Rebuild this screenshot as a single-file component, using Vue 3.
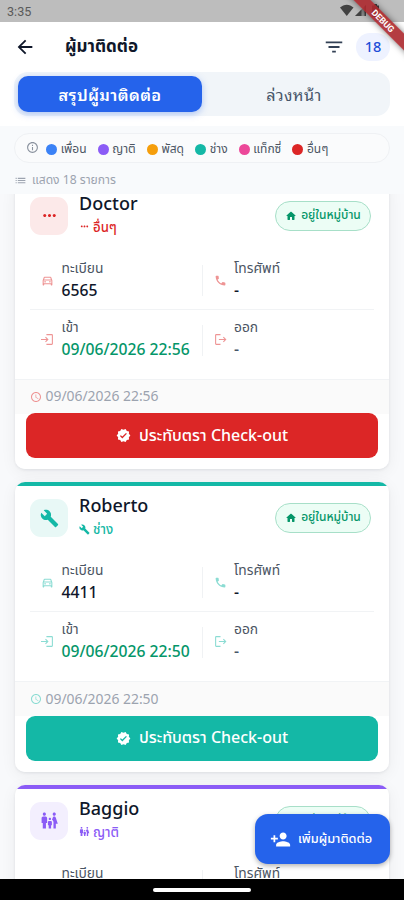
<script setup>
import { h } from 'vue'

const ICONS = {
  back: 'M20 11H7.83l5.59-5.59L12 4l-8 8 8 8 1.41-1.41L7.83 13H20v-2z',
  filter: 'M10 18h4v-2h-4v2zM3 6v2h18V6H3zm3 7h12v-2H6v2z',
  info: 'M11 7h2v2h-2zm0 4h2v6h-2zm1-9C6.48 2 2 6.48 2 12s4.48 10 10 10 10-4.48 10-10S17.52 2 12 2zm0 18c-4.41 0-8-3.59-8-8s3.59-8 8-8 8 3.59 8 8-3.59 8-8 8z',
  list: 'M3 13h2v-2H3v2zm0 4h2v-2H3v2zm0-8h2V7H3v2zm4 4h14v-2H7v2zm0 4h14v-2H7v2zM7 7v2h14V7H7z',
  dots: 'M6 10c-1.1 0-2 .9-2 2s.9 2 2 2 2-.9 2-2-.9-2-2-2zm12 0c-1.1 0-2 .9-2 2s.9 2 2 2 2-.9 2-2-.9-2-2-2zm-6 0c-1.1 0-2 .9-2 2s.9 2 2 2 2-.9 2-2-.9-2-2-2z',
  wrench: 'M22.7 19l-9.1-9.1c.9-2.3.4-5-1.5-6.9-2-2-5-2.4-7.4-1.3L9 6 6 9 1.6 4.7C.4 7.1.9 10.1 2.9 12.1c1.9 1.9 4.6 2.4 6.9 1.5l9.1 9.1c.4.4 1 .4 1.4 0l2.3-2.3c.5-.4.5-1.1.1-1.4z',
  family: 'M16 4c0-1.11.89-2 2-2s2 .89 2 2-.89 2-2 2-2-.89-2-2zm4 18v-6h2.5l-2.54-7.63C19.68 7.55 18.92 7 18.06 7h-.12c-.86 0-1.63.55-1.9 1.37l-.86 2.58c1.08.6 1.82 1.73 1.82 3.05v8h3zm-7.5-10.5c.83 0 1.5-.67 1.5-1.5s-.67-1.5-1.5-1.5S11 9.17 11 10s.67 1.5 1.5 1.5zM5.5 6c1.11 0 2-.89 2-2s-.89-2-2-2-2 .89-2 2 .89 2 2 2zm2 16v-7H9V9c0-1.1-.9-2-2-2H4c-1.1 0-2 .9-2 2v6h1.5v7h4zm6.5 0v-4h1v-4c0-.82-.68-1.5-1.5-1.5h-2c-.82 0-1.5.68-1.5 1.5v4h1v4h3z',
  home: 'M10 19v-5h4v5c0 .55.45 1 1 1h3c.55 0 1-.45 1-1v-7h1.7c.46 0 .68-.57.33-.87L12.67 3.6c-.38-.34-.96-.34-1.34 0l-8.36 7.53c-.34.3-.13.87.33.87H5v7c0 .55.45 1 1 1h3c.55 0 1-.45 1-1z',
  car: 'M18.92 6.01C18.72 5.42 18.16 5 17.5 5h-11c-.66 0-1.21.42-1.42 1.01L3 12v8c0 .55.45 1 1 1h1c.55 0 1-.45 1-1v-1h12v1c0 .55.45 1 1 1h1c.55 0 1-.45 1-1v-8l-2.08-5.99zM6.85 7h10.29l1.08 3.11H5.77L6.85 7zM19 17H5v-5h14v5zM7.5 13a1.5 1.5 0 1 0 0 3a1.5 1.5 0 1 0 0-3zM16.5 13a1.5 1.5 0 1 0 0 3a1.5 1.5 0 1 0 0-3z',
  phone: 'M6.62 10.79c1.44 2.83 3.76 5.14 6.59 6.59l2.2-2.2c.27-.27.67-.36 1.02-.24 1.12.37 2.33.57 3.57.57.55 0 1 .45 1 1V20c0 .55-.45 1-1 1-9.39 0-17-7.61-17-17 0-.55.45-1 1-1h3.5c.55 0 1 .45 1 1 0 1.25.2 2.45.57 3.57.11.35.03.74-.25 1.02l-2.2 2.2z',
  login: 'M10 2h10a2 2 0 0 1 2 2v16a2 2 0 0 1-2 2H10v-2h10V4H10zM0 11h10.2L7.6 8.4 9 7l5 5-5 5-1.4-1.4 2.6-2.6H0z',
  logout: 'M12 2H4a2 2 0 0 0-2 2v16a2 2 0 0 0 2 2h8v-2H4V4h8zM9 11h10.2l-2.6-2.6L18 7l5 5-5 5-1.4-1.4 2.6-2.6H9z',
  clock: 'M11.99 2C6.47 2 2 6.48 2 12s4.47 10 9.99 10C17.52 22 22 17.52 22 12S17.52 2 11.99 2zM12 20c-4.42 0-8-3.58-8-8s3.58-8 8-8 8 3.58 8 8-3.58 8-8 8zm.5-13H11v6l5.25 3.15.75-1.23-4.5-2.67z',
  verified: 'M23 12l-2.44-2.79.34-3.69-3.61-.82-1.89-3.2L12 2.96 8.6 1.5 6.71 4.69 3.1 5.5l.34 3.7L1 12l2.44 2.79-.34 3.7 3.61.82L8.6 22.5l3.4-1.47 3.4 1.46 1.89-3.19 3.61-.82-.34-3.69L23 12zm-12.91 4.72l-3.8-3.81 1.48-1.48 2.32 2.33 5.85-5.87 1.48 1.48-7.33 7.35z',
  addPerson: 'M15 12c2.21 0 4-1.79 4-4s-1.79-4-4-4-4 1.79-4 4 1.79 4 4 4zm-9-2V7H4v3H1v2h3v3h2v-3h3v-2H6zm9 4c-2.67 0-8 1.34-8 4v2h16v-2c0-2.66-5.33-4-8-4z'
}

const Icon = (props) =>
  h('svg', { viewBox: '0 0 24 24', width: props.size, height: props.size, fill: 'currentColor' }, [
    h('path', { d: ICONS[props.name] })
  ])
Icon.props = ['name', 'size']

const legend = [
  { label: 'เพื่อน', color: '#3b82f6' },
  { label: 'ญาติ', color: '#8b5cf6' },
  { label: 'พัสดุ', color: '#f59e0b' },
  { label: 'ช่าง', color: '#14b8a6' },
  { label: 'แท็กซี่', color: '#ec4899' },
  { label: 'อื่นๆ', color: '#dc2626' }
]

const visitors = [
  { name: 'Doctor', kind: 'อื่นๆ', icon: 'dots', theme: 'red', plate: '6565', time: '09/06/2026 22:56' },
  { name: 'Roberto', kind: 'ช่าง', icon: 'wrench', theme: 'teal', plate: '4411', time: '09/06/2026 22:50' },
  { name: 'Baggio', kind: 'ญาติ', icon: 'family', theme: 'violet' }
]
</script>

<template>
  <div class="screen">
    <div class="status">
      <span class="clock">3:35</span>
      <svg class="signals" width="44" height="14" viewBox="0 0 44 14">
        <path d="M0 3.6C4-.3 9.500-.3 13.500 3.600L6.750 12z" fill="#424242" />
        <path d="M26 1v11H15z" fill="#8a8a8a" />
        <path d="M21.500 5.500V12H15zM24.500 2.500V12H26V1z" fill="#424242" />
        <path d="M34 0h3v1.500h2V12a1 1 0 0 1-1 1h-5a1 1 0 0 1-1-1V1.500h2z" fill="#424242" />
      </svg>
    </div>
    <header class="bar">
      <Icon name="back" size="22" class="back" />
      <h1>ผู้มาติดต่อ</h1>
      <Icon name="filter" size="22" class="filter" />
      <span class="count">18</span>
    </header>
    <div class="tabwrap">
      <nav class="tabs">
        <span class="tab active">สรุปผู้มาติดต่อ</span>
        <span class="tab">ล่วงหน้า</span>
      </nav>
    </div>
    <div class="legend">
      <Icon name="info" size="13" class="info" />
      <span v-for="l in legend" :key="l.label" class="key">
        <i :style="{ background: l.color }"></i><span>{{ l.label }}</span>
      </span>
    </div>
    <div class="total"><Icon name="list" size="13" /><span>แสดง 18 รายการ</span></div>

    <main class="list">
      <div class="cards">
        <article v-for="v in visitors" :key="v.name" class="card" :class="v.theme">
          <div class="head">
            <div class="avatar"><Icon :name="v.icon" size="19" /></div>
            <div class="who">
              <div class="name">{{ v.name }}</div>
              <div class="kind"><Icon :name="v.icon" size="11" /><span>{{ v.kind }}</span></div>
            </div>
            <div class="badge"><Icon name="home" size="12" /><span>อยู่ในหมู่บ้าน</span></div>
          </div>
          <div class="row">
            <div class="cell">
              <Icon v-if="v.plate" name="car" size="13" />
              <div v-else class="gap"></div>
              <div><div class="label">ทะเบียน</div><div v-if="v.plate" class="value">{{ v.plate }}</div></div>
            </div>
            <div class="cell right">
              <Icon v-if="v.plate" name="phone" size="13" />
              <div v-else class="gap"></div>
              <div><div class="label">โทรศัพท์</div><div v-if="v.plate" class="value">-</div></div>
            </div>
          </div>
          <template v-if="v.time">
            <div class="row second">
              <div class="cell">
                <Icon name="login" size="13" />
                <div><div class="label">เข้า</div><div class="value green">{{ v.time }}</div></div>
              </div>
              <div class="cell right">
                <Icon name="logout" size="13" />
                <div><div class="label">ออก</div><div class="value grey">-</div></div>
              </div>
            </div>
            <div class="foot"><Icon name="clock" size="12" /><span>{{ v.time }}</span></div>
            <button class="stamp"><Icon name="verified" size="15" /><span>ประทับตรา Check-out</span></button>
          </template>
        </article>
      </div>
    </main>

    <div class="navbar"><i></i></div>
    <button class="fab"><Icon name="addPerson" size="21" /><span>เพิ่มผู้มาติดต่อ</span></button>
    <div class="debug">DEBUG</div>
  </div>
</template>

<style>
body { margin: 0; overflow: hidden; }
</style>

<style scoped>
.screen {
  position: relative;
  display: flex;
  flex-direction: column;
  width: 404px;
  height: 900px;
  overflow: hidden;
  background: #f8fafc;
  font-family: "Noto Sans", "Noto Sans Thai", "Noto Sans Thai UI", sans-serif;
  color: #0f172a;
}
.screen * { box-sizing: border-box; white-space: nowrap; }
svg { display: block; flex: none; }
button { border: 0; font-family: inherit; }
.status {
  flex: none;
  height: 22px;
  display: flex;
  justify-content: space-between;
  align-items: center;
  padding: 0 20px 0 7px;
  background: #bdbdbd;
}
.clock { font: 12.6px/24px Roboto, sans-serif; color: #5a5a5a; padding-top: 1px; }
.bar {
  flex: none;
  height: 50px;
  display: flex;
  align-items: center;
  padding: 0 14px;
  background: #fff;
}
.back { margin-right: 29px; }
h1 { margin: 0; flex: 1; font-size: 17px; line-height: 28px; padding-bottom: 2px; font-weight: 700; }
.filter { color: #334155; margin-right: 11px; }
.count {
  width: 34px;
  height: 28px;
  border-radius: 14px;
  background: #eef2ff;
  color: #1d4ed8;
  font-size: 14.5px;
  font-weight: 500;
  line-height: 27px;
  text-align: center;
}
.tabwrap { flex: none; height: 54px; padding: 0 14px; background: #fff; }
.tabs {
  display: flex;
  height: 44px;
  padding: 4px;
  border-radius: 14px;
  background: #f1f5f9;
}
.tab {
  flex: 1;
  text-align: center;
  font-family: "Noto Sans Thai Looped", "Noto Looped Thai", "Noto Sans", sans-serif;
  font-size: 16.3px;
  letter-spacing: .4px;
  line-height: 36px;
  color: #475569;
}
.active {
  border-radius: 10px;
  background: #2563eb;
  color: #fff;
  font-weight: 600;
  box-shadow: 0 2px 7px rgba(37, 99, 235, .35);
}
.legend {
  flex: none;
  display: flex;
  align-items: center;
  height: 30px;
  margin: 7px 14px 0;
  padding: 2px 0 0 11px;
  border: 1px solid #eff1f4;
  border-radius: 15px;
  background: #fafbfc;
  font-size: 12px;
  line-height: 26px;
  color: #4b5563;
}
.info { color: #8a929e; margin: -3px 7px 0 0; }
.key { display: flex; align-items: center; margin-right: 11px; }
.key i { width: 11px; height: 11px; border-radius: 50%; margin-right: 3.700px; }
.total {
  flex: none;
  display: flex;
  align-items: center;
  gap: 5px;
  height: 31px;
  padding: 3px 0 0 14px;
  font-size: 12.1px;
  line-height: 20px;
  color: #9ca3af;
}
.list { flex: 1; min-height: 0; overflow: hidden; background: #f8f9fb; }
.cards {
  display: flex;
  flex-direction: column;
  gap: 13px;
  padding: 0 15px;
  margin-top: -14.5px;
}
.card {
  flex: none;
  height: 289.5px;
  padding-top: 4px;
  border-radius: 10px;
  background: linear-gradient(var(--c) 4px, #fff 4px);
  box-shadow: 0 1px 3px rgba(15, 23, 42, .08), 0 3px 16px rgba(15, 23, 42, .06);
  overflow: hidden;
}
.red { --c: #dc2626; --soft: #fce9e9; --dim: #ee9494; }
.teal { --c: #14b8a6; --soft: #e8f8f6; --dim: #8bdcd3; }
.violet { --c: #8b5cf6; --soft: #f3effe; --dim: #c5aefb; }
.head { display: flex; height: 66px; padding: 13px 18px 0 15px; }
.avatar {
  display: flex;
  align-items: center;
  justify-content: center;
  width: 38px;
  height: 38px;
  border-radius: 11px;
  background: var(--soft);
  color: var(--c);
}
.who { flex: 1; margin-left: 11px; margin-top: -6px; }
.name { height: 25px; font-size: 18px; line-height: 24px; font-weight: 500; }
.kind { display: flex; align-items: center; gap: 3px; height: 22px; font-size: 13.2px; line-height: 22px; color: var(--c); font-weight: 500; }
.badge {
  display: flex;
  align-items: center;
  justify-content: center;
  gap: 4px;
  width: 96px;
  height: 30px;
  margin-top: 4px;
  border: 1px solid #a7dfc8;
  border-radius: 15px;
  background: #ecfdf5;
  color: #059669;
  font-size: 12px;
  line-height: 26px;
  font-weight: 500;
}
.badge span { margin-top: -2px; }
.row { display: flex; height: 60px; margin: 0 15px; border-bottom: 1px solid #f1f3f5; }
.second { height: 69px; border-bottom: 0; }
.cell { position: relative; display: flex; width: 172px; height: 59px; padding: 7px 0 0 11px; color: var(--dim); }
.second .cell { padding-top: 6px; }
.cell > svg { margin: 17px 7.5px 0 0; }
.gap { width: 20.5px; }
.cell.right { padding-left: 11.5px; }
.cell.right::before { content: ""; position: absolute; left: 0; top: 15px; width: 1px; height: 31px; background: #f0f2f4; }
.label { height: 22px; font-size: 13.8px; line-height: 21px; color: #4b5563; }
.value { height: 23px; font-size: 15.7px; line-height: 23px; font-weight: 500; color: #0f172a; }
.value.green { color: #059669; }
.value.grey { color: #475569; }
.foot {
  display: flex;
  align-items: center;
  gap: 3.5px;
  height: 35px;
  padding-left: 15px;
  border-top: 1px solid #f1f3f5;
  background: #fafafa;
  color: var(--dim);
  font-size: 13.9px;
}
.foot span { color: #9ca3af; margin-top: -2px; }
.stamp {
  display: flex;
  align-items: center;
  justify-content: center;
  gap: 8px;
  width: 352px;
  height: 45px;
  margin: -.5px auto 0;
  border-radius: 9px;
  background: var(--c);
  color: #fff;
  font-size: 16px;
  font-weight: 500;
}
.navbar { flex: none; display: flex; align-items: center; justify-content: center; height: 21px; background: #000; }
.navbar i { width: 98px; height: 4px; border-radius: 2px; background: #fff; }
.fab {
  position: absolute;
  left: 255px;
  top: 814px;
  display: flex;
  align-items: center;
  gap: 7px;
  width: 135px;
  height: 50px;
  padding: 0 0 0 15px;
  border-radius: 13px;
  background: #2563eb;
  color: #fff;
  font-size: 12.8px;
  font-weight: 500;
  box-shadow: 0 2px 5px rgba(0, 0, 0, .3);
}
.debug {
  position: absolute;
  left: 333px;
  top: 15px;
  width: 100px;
  height: 12px;
  transform: rotate(45deg);
  background: rgba(172, 40, 46, .9);
  color: #fff;
  font: 700 8.8px/12px Roboto, sans-serif;
  text-align: center;
  box-shadow: 0 0 6px rgba(0, 0, 0, .5);
}
</style>
